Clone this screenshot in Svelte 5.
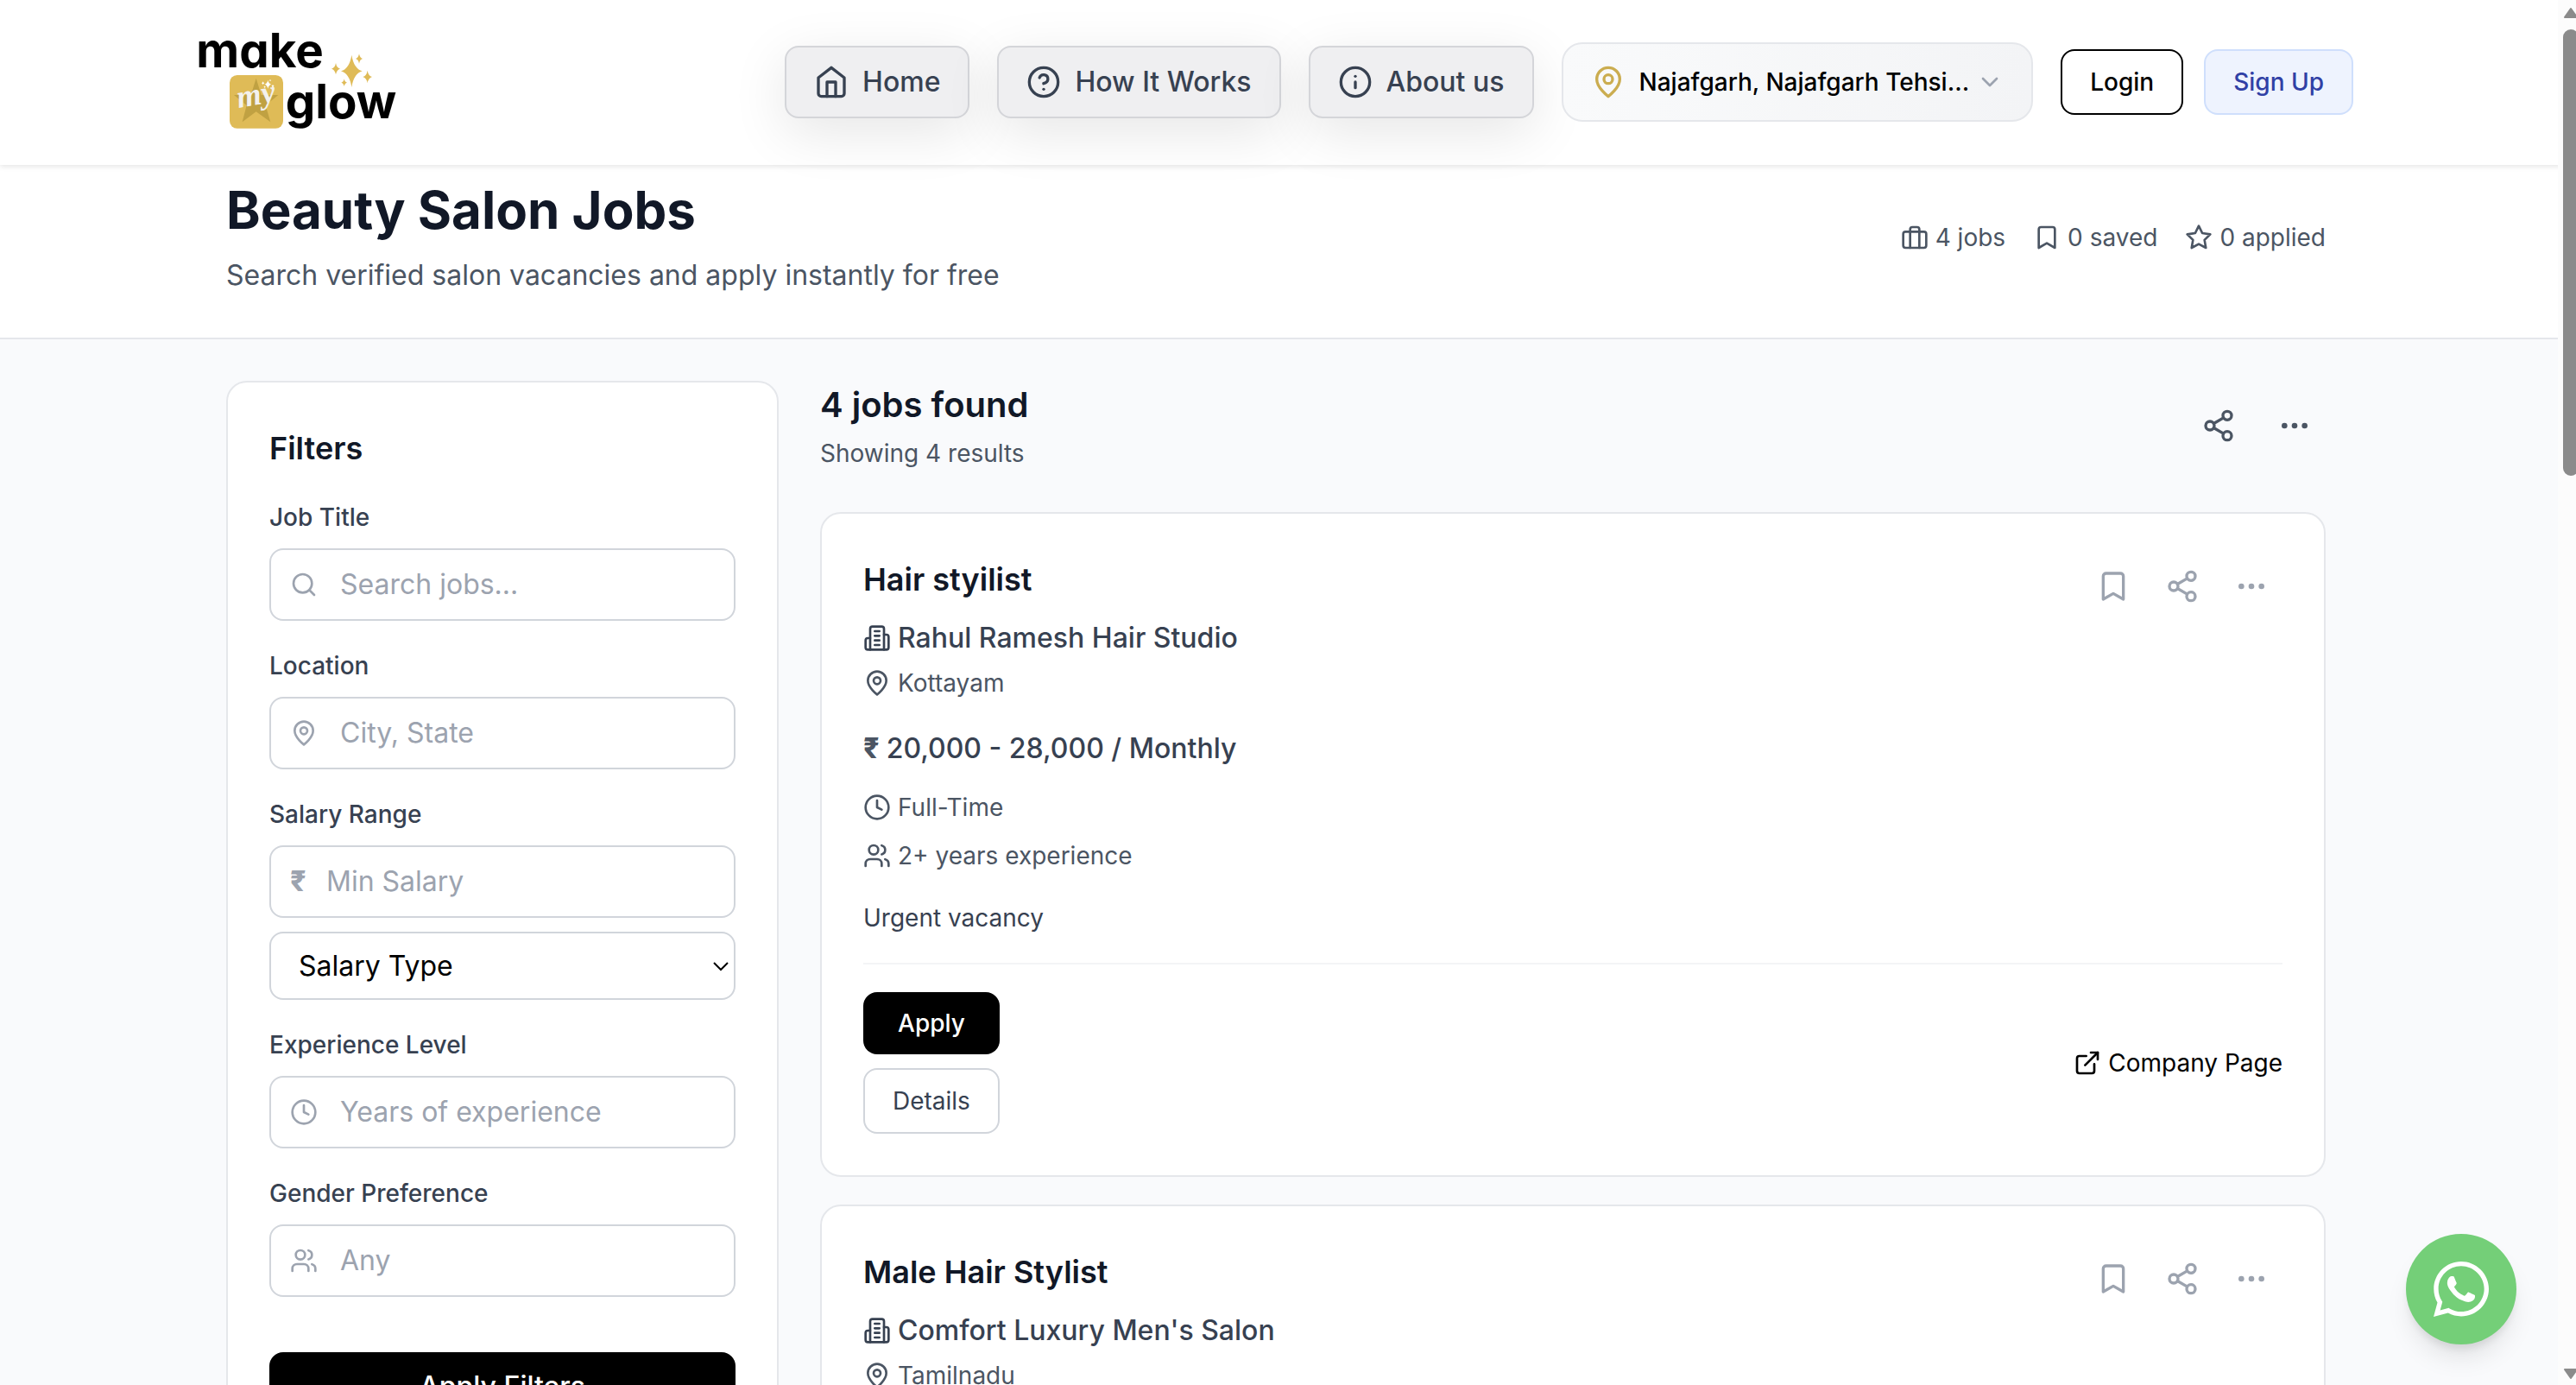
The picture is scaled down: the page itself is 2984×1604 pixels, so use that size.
<script lang="ts">
  type Job = {
    title: string;
    company: string;
    location: string;
    salary?: string;
    type?: string;
    experience?: string;
    note?: string;
  };

  type Field = { id: string; label: string; placeholder: string; icon: string };

  const circle = (x: number, y: number, r: number) =>
    `M${x - r} ${y}a${r} ${r} 0 1 0 ${r * 2} 0a${r} ${r} 0 1 0 ${-r * 2} 0`;

  // 24x24 stroke icons
  const icons: Record<string, string[]> = {
    home: ["M3 9l9-7 9 7v11a2 2 0 0 1-2 2H5a2 2 0 0 1-2-2z", "M9 22V12h6v10"],
    help: [circle(12, 12, 10), "M9.09 9a3 3 0 0 1 5.83 1c0 2-3 3-3 3", "M12 17h.01"],
    info: [circle(12, 12, 10), "M12 16v-4", "M12 8h.01"],
    pin: ["M20 10c0 6-8 12-8 12s-8-6-8-12a8 8 0 0 1 16 0Z", circle(12, 10, 3)],
    chevron: ["m6 9 6 6 6-6"],
    briefcase: [
      "M4 7h16a2 2 0 0 1 2 2v10a2 2 0 0 1-2 2H4a2 2 0 0 1-2-2V9a2 2 0 0 1 2-2z",
      "M16 21V5a2 2 0 0 0-2-2h-4a2 2 0 0 0-2 2v16",
    ],
    bookmark: ["m19 21-7-4-7 4V5a2 2 0 0 1 2-2h10a2 2 0 0 1 2 2v16z"],
    star: ["M12 2l3.09 6.26L22 9.27l-5 4.87 1.18 6.88L12 17.77l-6.18 3.25L7 14.14 2 9.27l6.91-1.01z"],
    share: [
      circle(18, 5, 3),
      circle(6, 12, 3),
      circle(18, 19, 3),
      "M8.59 13.51l6.83 3.98",
      "M15.41 6.51l-6.82 3.98",
    ],
    more: [circle(12, 12, 1), circle(19, 12, 1), circle(5, 12, 1)],
    search: [circle(11, 11, 8), "m21 21-4.3-4.3"],
    clock: [circle(12, 12, 10), "M12 6v6l4 2"],
    users: [
      "M16 21v-2a4 4 0 0 0-4-4H6a4 4 0 0 0-4 4v2",
      circle(9, 7, 4),
      "M22 21v-2a4 4 0 0 0-3-3.87",
      "M16 3.13a4 4 0 0 1 0 7.75",
    ],
    building: [
      "M6 22V4a2 2 0 0 1 2-2h8a2 2 0 0 1 2 2v18Z",
      "M6 12H4a2 2 0 0 0-2 2v6a2 2 0 0 0 2 2h2",
      "M18 9h2a2 2 0 0 1 2 2v9a2 2 0 0 1-2 2h-2",
      "M10 6h4",
      "M10 10h4",
      "M10 14h4",
      "M10 18h4",
    ],
    external: [
      "M15 3h6v6",
      "M10 14 21 3",
      "M18 13v6a2 2 0 0 1-2 2H5a2 2 0 0 1-2-2V8a2 2 0 0 1 2-2h6",
    ],
  };

  const navLinks = [
    { label: "Home", icon: "home" },
    { label: "How It Works", icon: "help" },
    { label: "About us", icon: "info" },
  ];

  const stats = [
    { label: "4 jobs", icon: "briefcase" },
    { label: "0 saved", icon: "bookmark" },
    { label: "0 applied", icon: "star" },
  ];

  const topFields: Field[] = [
    { id: "title", label: "Job Title", placeholder: "Search jobs...", icon: "search" },
    { id: "location", label: "Location", placeholder: "City, State", icon: "pin" },
  ];

  const bottomFields: Field[] = [
    { id: "experience", label: "Experience Level", placeholder: "Years of experience", icon: "clock" },
    { id: "gender", label: "Gender Preference", placeholder: "Any", icon: "users" },
  ];

  const jobs: Job[] = [
    {
      title: "Hair styilist",
      company: "Rahul Ramesh Hair Studio",
      location: "Kottayam",
      salary: "20,000 - 28,000 / Monthly",
      type: "Full-Time",
      experience: "2+ years experience",
      note: "Urgent vacancy",
    },
    { title: "Male Hair Stylist", company: "Comfort Luxury Men's Salon", location: "Tamilnadu" },
  ];

  let values = $state<Record<string, string>>({ title: "", location: "", salary: "", experience: "", gender: "" });
  let salaryType = $state("");

  function sparkle(x: number, y: number, w: number, h: number): string {
    const a = w * 0.2;
    const b = h * 0.16;
    return `M${x} ${y - h}Q${x + a} ${y - b} ${x + w} ${y}Q${x + a} ${y + b} ${x} ${y + h}Q${x - a} ${y + b} ${x - w} ${y}Q${x - a} ${y - b} ${x} ${y - h}Z`;
  }
</script>

{#snippet icon(name: string, size = "sm")}
  <svg class="icon {size}" viewBox="0 0 24 24" aria-hidden="true">
    {#each icons[name] as d}
      <path {d} />
    {/each}
  </svg>
{/snippet}

{#snippet field(f: Field)}
  <div class="field">
    <label for={f.id}>{f.label}</label>
    <div class="control">
      <span class="control-icon">{@render icon(f.icon)}</span>
      <input id={f.id} type="text" placeholder={f.placeholder} bind:value={values[f.id]} />
    </div>
  </div>
{/snippet}

<div class="page">
  <header class="topbar">
    <div class="topbar-inner">
      <a class="logo" href="/" aria-label="make my glow">
        <svg viewBox="87 45 720 360">
          <text class="logo-word" x="79" y="175">make</text>
          <text class="logo-word" x="389" y="350">glow</text>
          <rect x="195" y="201" width="186" height="185" rx="26" fill="#dfbb57" />
          <path
            fill="#c0a142"
            d="M287 212L305 270L364 270L320 306L337 364L287 328L239 364L254 306L210 270L269 270Z"
          />
          <text class="logo-script" x="226" y="315" transform="rotate(-10 226 315)">my</text>
          <g fill="#dfbb57">
            <path d={sparkle(619, 187, 37, 56)} />
            <path d={sparkle(645, 144, 12, 17)} />
            <path d={sparkle(564, 179, 15, 20)} />
            <path d={sparkle(674, 207, 16, 22)} />
            <path d={sparkle(593, 227, 10, 13)} />
          </g>
          <g fill="#fff">
            <path d={sparkle(328, 233, 12, 15)} />
            <path d={sparkle(336, 219, 4, 4)} />
            <path d={sparkle(311, 229, 5, 6)} />
            <path d={sparkle(345, 239, 5, 6)} />
            <path d={sparkle(317, 242, 4, 4)} />
          </g>
        </svg>
      </a>

      <nav>
        {#each navLinks as link}
          <a class="nav-link" href="/">
            {@render icon(link.icon, "md")}
            {link.label}
          </a>
        {/each}
        <button class="place" type="button">
          <span class="place-pin">{@render icon("pin", "md")}</span>
          <span class="place-name">Najafgarh, Najafgarh Tehsi...</span>
          <span class="place-arrow">{@render icon("chevron")}</span>
        </button>
        <div class="auth">
          <a class="login" href="/login">Login</a>
          <a class="signup" href="/signup">Sign Up</a>
        </div>
      </nav>
    </div>
  </header>

  <section class="intro">
    <div class="container intro-inner">
      <div>
        <h1>Beauty Salon Jobs</h1>
        <p>Search verified salon vacancies and apply instantly for free</p>
      </div>
      <ul class="stats">
        {#each stats as s}
          <li>{@render icon(s.icon)}{s.label}</li>
        {/each}
      </ul>
    </div>
  </section>

  <main class="container layout">
    <aside class="panel filters">
      <h2>Filters</h2>
      {#each topFields as f}
        {@render field(f)}
      {/each}

      <div class="field">
        <label for="salary">Salary Range</label>
        <div class="control">
          <span class="control-icon rupee">₹</span>
          <input
            id="salary"
            class="short"
            type="text"
            placeholder="Min Salary"
            bind:value={values.salary}
          />
        </div>
        <div class="control">
          <select aria-label="Salary Type" bind:value={salaryType}>
            <option value="">Salary Type</option>
            <option value="monthly">Monthly</option>
          </select>
          <svg class="select-arrow" viewBox="0 0 20 12" aria-hidden="true">
            <path d="M2 2l8 8 8-8" />
          </svg>
        </div>
      </div>

      {#each bottomFields as f}
        {@render field(f)}
      {/each}

      <button class="apply-filters" type="button">Apply Filters</button>
    </aside>

    <div class="results">
      <div class="results-head">
        <div>
          <h2>4 jobs found</h2>
          <p>Showing 4 results</p>
        </div>
        <div class="results-actions">
          <button class="icon-button" type="button" aria-label="Share">{@render icon("share", "md")}</button>
          <button class="icon-button" type="button" aria-label="More">{@render icon("more", "md")}</button>
        </div>
      </div>

      {#each jobs as job}
        <article class="panel job">
          <div class="job-head">
            <div>
              <h3>{job.title}</h3>
              <div class="row company">{@render icon("building")}{job.company}</div>
              <div class="row place-row">{@render icon("pin")}{job.location}</div>
            </div>
            <div class="job-actions">
              <button class="icon-button" type="button" aria-label="Save">{@render icon("bookmark", "md")}</button>
              <button class="icon-button" type="button" aria-label="Share">{@render icon("share", "md")}</button>
              <button class="icon-button" type="button" aria-label="More">{@render icon("more", "md")}</button>
            </div>
          </div>

          {#if job.salary}
            <div class="row salary"><span class="rupee">₹</span>{job.salary}</div>
            <div class="facts">
              <div class="row">{@render icon("clock")}{job.type}</div>
              <div class="row">{@render icon("users")}{job.experience}</div>
            </div>
            <p class="note">{job.note}</p>
            <div class="job-foot">
              <div class="job-buttons">
                <button class="apply" type="button">Apply</button>
                <button class="details" type="button">Details</button>
              </div>
              <a class="row company-link" href="/company">{@render icon("external")}Company Page</a>
            </div>
          {/if}
        </article>
      {/each}
    </div>
  </main>

  <a class="whatsapp" href="/chat" aria-label="WhatsApp">
    <svg viewBox="0 32 448 448">
      <path
        d="M380.9 97.1C339 55.1 283.2 32 223.9 32c-122.4 0-222 99.6-222 222 0 39.1 10.2 77.3 29.6 111L0 480l117.7-30.9c32.4 17.7 68.9 27 106.1 27h.1c122.3 0 224.1-99.6 224.1-222 0-59.3-25.2-115-67.1-157zm-157 341.6c-33.2 0-65.7-8.9-94-25.7l-6.7-4-69.8 18.3L72 359.2l-4.4-7c-18.5-29.4-28.2-63.3-28.2-98.2 0-101.7 82.8-184.5 184.6-184.5 49.3 0 95.6 19.2 130.4 54.1 34.8 34.9 56.2 81.2 56.1 130.5 0 101.8-84.9 184.6-186.6 184.6zm101.2-138.2c-5.5-2.8-32.8-16.2-37.9-18-5.1-1.9-8.8-2.8-12.5 2.8-3.7 5.6-14.3 18-17.6 21.8-3.2 3.7-6.5 4.2-12 1.4-32.6-16.3-54-29.1-75.5-66-5.7-9.8 5.7-9.1 16.3-30.3 1.8-3.7.9-6.9-.5-9.7-1.4-2.8-12.5-30.1-17.1-41.2-4.5-10.8-9.1-9.3-12.5-9.5-3.2-.2-6.9-.2-10.6-.2-3.7 0-9.7 1.4-14.8 6.9-5.1 5.6-19.4 19-19.4 46.3 0 27.3 19.9 53.7 22.6 57.4 2.8 3.7 39.1 59.7 94.8 83.8 35.2 15.2 49 16.5 66.6 13.9 10.7-1.6 32.8-13.4 37.4-26.4 4.6-13 4.6-24.1 3.2-26.4-1.3-2.5-5-3.9-10.5-6.6z"
      />
    </svg>
  </a>

  <div class="scrollbar" aria-hidden="true">
    <svg class="arrow" viewBox="0 0 18 14"><path d="M9 2L16 12H2Z" /></svg>
    <div class="thumb"></div>
    <svg class="arrow down" viewBox="0 0 18 14"><path d="M9 12L16 2H2Z" /></svg>
  </div>
</div>

<style>
  :global(body) {
    overflow: hidden;
    background: #f9fafb;
  }

  .page {
    height: 100vh;
    overflow: hidden;
    background: #f9fafc;
    font-family: Inter, "Liberation Sans", sans-serif;
    font-size: 28px;
    line-height: 40px;
    color: #4b5563;
  }

  .page :global(*) {
    box-sizing: border-box;
  }

  h1, h2, h3, p, ul {
    margin: 0;
    padding: 0;
  }

  a {
    color: inherit;
    text-decoration: none;
  }

  button, input, select {
    font: inherit;
    margin: 0;
  }

  button {
    cursor: pointer;
  }

  .icon {
    display: block;
    flex: none;
    width: 32px;
    height: 32px;
    fill: none;
    stroke: currentColor;
    stroke-width: 2;
    stroke-linecap: round;
    stroke-linejoin: round;
  }

  .icon.md {
    width: 40px;
    height: 40px;
  }

  /* Top bar */
  .topbar {
    position: relative;
    padding: 35px 28px 36px 0;
    background: #fff;
    box-shadow: 0 2px 6px rgba(0, 0, 0, 0.1);
  }

  .topbar-inner {
    display: flex;
    align-items: center;
    justify-content: space-between;
    max-width: 2560px;
    margin: 0 auto;
    padding: 0 32px;
  }

  .logo svg {
    display: block;
    width: 240px;
    height: 120px;
    overflow: visible;
  }

  .logo-word {
    font-size: 164px;
    font-weight: 700;
    font-feature-settings: "cv11" 1;
    fill: #000;
  }

  .logo-script {
    font-family: "Liberation Serif", serif;
    font-size: 110px;
    font-style: italic;
    font-weight: 700;
    fill: #f3f1ee;
  }

  nav {
    display: flex;
    align-items: center;
    gap: 32px;
  }

  .nav-link {
    display: flex;
    align-items: center;
    gap: 16px;
    padding: 16px 32px;
    border: 2px solid #d4d5d9;
    border-radius: 16px;
    background: #efeff1;
    box-shadow: 0 16px 64px rgba(0, 0, 0, 0.1);
    color: #374151;
    font-size: 32px;
    font-weight: 500;
    line-height: 48px;
  }

  .place {
    display: flex;
    align-items: center;
    gap: 8px;
    padding: 24px 32px;
    border: 2px solid #e5e7eb;
    border-radius: 24px;
    background: linear-gradient(90deg, #f9fafb, #f3f4f6);
    color: #000;
    font-weight: 500;
  }

  .place-pin {
    margin-right: 8px;
    color: #cbad50;
  }

  .place-arrow {
    color: #9ca3af;
  }

  .auth {
    display: flex;
    gap: 24px;
  }

  .login,
  .signup {
    padding: 16px 32px;
    border: 2px solid #000;
    border-radius: 16px;
    color: #000;
    font-weight: 500;
  }

  .signup {
    border-color: #cfdffc;
    background: #eef3fe;
    color: #3040a5;
  }

  /* Title band */
  .container {
    max-width: 2560px;
    margin: 0 auto;
    padding: 0 64px;
  }

  .intro {
    padding: 16px 28px 48px 0;
    border-bottom: 2px solid #e5e7eb;
    background: #fff;
  }

  .intro-inner {
    display: flex;
    align-items: center;
    justify-content: space-between;
  }

  h1 {
    margin-bottom: 16px;
    color: #111827;
    font-size: 60px;
    font-weight: 700;
    line-height: 72px;
  }

  .intro p {
    font-size: 32px;
    line-height: 48px;
  }

  .stats {
    display: flex;
    gap: 32px;
    list-style: none;
  }

  .stats li {
    display: flex;
    align-items: center;
    gap: 8px;
  }

  /* Main grid */
  .layout {
    display: grid;
    grid-template-columns: 640px 1fr;
    gap: 48px;
    align-items: start;
    width: calc(100% - 28px);
    max-width: 2560px;
    margin-left: max(0px, calc((100% - 2588px) / 2));
    padding-top: 48px;
  }

  .panel {
    padding: 48px;
    border: 2px solid #e5e7eb;
    border-radius: 24px;
    background: #fff;
  }

  .filters h2 {
    color: #111827;
    font-size: 36px;
    font-weight: 600;
    line-height: 56px;
  }

  .field {
    display: flex;
    flex-direction: column;
    gap: 16px;
    margin-top: 32px;
  }

  label {
    color: #374151;
    font-weight: 500;
  }

  .control {
    position: relative;
  }

  .control-icon {
    position: absolute;
    top: 50%;
    left: 24px;
    transform: translateY(-50%);
    color: #9ca3af;
  }

  .control input,
  .control select {
    display: block;
    width: 100%;
    height: 84px;
    padding: 0 32px 2px 80px;
    border: 2px solid #d1d5db;
    border-radius: 16px;
    background: #fff;
    color: #000;
    font-size: 32px;
  }

  .control input.short {
    padding-left: 64px;
  }

  .control input::placeholder {
    color: #9ca3af;
    opacity: 1;
  }

  .control select {
    height: 79px;
    padding: 0 32px;
    appearance: none;
  }

  .select-arrow {
    position: absolute;
    top: 50%;
    right: 7px;
    width: 20px;
    height: 12px;
    transform: translateY(-50%);
    fill: none;
    stroke: #000;
    stroke-width: 2;
  }

  .rupee {
    font-size: 32px;
    font-weight: 800;
  }

  .apply-filters {
    width: 100%;
    margin-top: 64px;
    padding: 16px;
    border: 0;
    border-radius: 16px;
    background: #000;
    color: #fff;
    font-size: 32px;
    font-weight: 500;
    line-height: 48px;
  }

  /* Results */
  .results {
    display: flex;
    flex-direction: column;
    gap: 32px;
  }

  .results-head {
    display: flex;
    align-items: center;
    justify-content: space-between;
    margin-bottom: 16px;
  }

  .results-head h2 {
    margin-bottom: 8px;
    color: #111827;
    font-size: 40px;
    font-weight: 600;
    line-height: 56px;
  }

  .results-actions {
    display: flex;
    gap: 16px;
  }

  .icon-button {
    padding: 16px;
    border: 0;
    border-radius: 16px;
    background: none;
    color: inherit;
  }

  .job-head {
    display: flex;
    align-items: flex-start;
    justify-content: space-between;
  }

  .job-actions {
    display: flex;
    gap: 8px;
    color: #9ca3af;
  }

  h3 {
    color: #111827;
    font-size: 36px;
    font-weight: 600;
    line-height: 56px;
  }

  .row {
    display: flex;
    align-items: center;
    gap: 8px;
  }

  .company {
    margin-top: 16px;
    color: #374151;
    font-size: 32px;
    font-weight: 500;
    line-height: 48px;
  }

  .place-row {
    margin-top: 8px;
  }

  .salary {
    margin-top: 32px;
    color: #374151;
    font-size: 32px;
    font-weight: 500;
    line-height: 48px;
  }

  .salary .rupee {
    color: #4b5563;
  }

  .facts {
    display: flex;
    flex-direction: column;
    gap: 16px;
    margin-top: 24px;
  }

  .note {
    margin-top: 32px;
    color: #374151;
  }

  .job-foot {
    display: flex;
    align-items: center;
    justify-content: space-between;
    margin-top: 32px;
    padding-top: 32px;
    border-top: 2px solid #f3f4f6;
  }

  .job-buttons {
    display: flex;
    flex-direction: column;
    gap: 16px;
  }

  .apply,
  .details {
    padding: 16px 32px;
    border: 0;
    border-radius: 16px;
    background: #000;
    color: #fff;
    font-weight: 500;
  }

  .details {
    border: 2px solid #d1d5db;
    background: #fff;
    color: #374151;
    font-weight: 400;
  }

  .company-link {
    color: #000;
  }

  /* Floating chat button */
  .whatsapp {
    position: fixed;
    right: 69px;
    bottom: 47px;
    display: flex;
    align-items: center;
    justify-content: center;
    width: 128px;
    height: 128px;
    border-radius: 50%;
    background: #74cf78;
    box-shadow: 0 20px 30px -6px rgba(0, 0, 0, 0.1), 0 8px 12px -4px rgba(0, 0, 0, 0.1);
  }

  .whatsapp svg {
    width: 64px;
    height: 64px;
    fill: #fff;
  }

  .scrollbar {
    position: fixed;
    top: 0;
    right: 0;
    bottom: 0;
    display: flex;
    flex-direction: column;
    width: 21px;
    padding: 8px 0 6px 6px;
    overflow: hidden;
    background: #fcfcfc;
  }

  .thumb {
    width: 18px;
    height: calc(32% + 8px);
    margin-top: 12px;
    border-radius: 9px;
    background: #8b8b8b;
  }

  .arrow {
    width: 18px;
    height: 14px;
    fill: #8b8b8b;
    stroke: #8b8b8b;
    stroke-width: 2;
    stroke-linejoin: round;
    flex: none;
  }

  .arrow.down {
    margin-top: auto;
  }
</style>
